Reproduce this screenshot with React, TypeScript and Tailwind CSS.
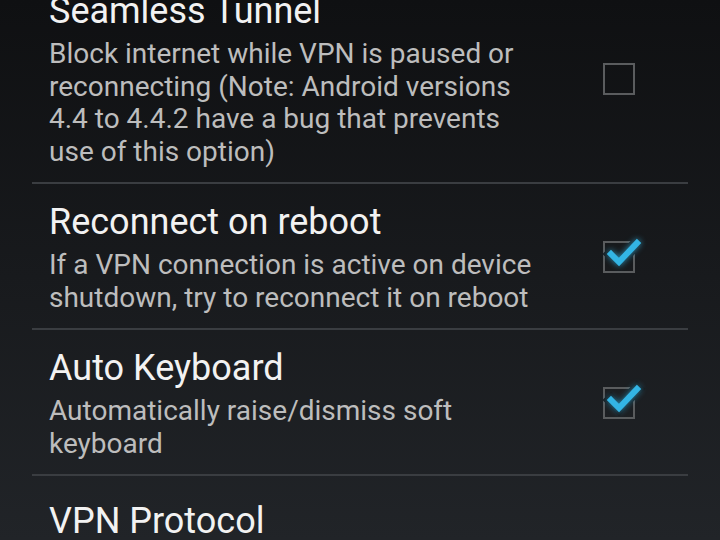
import React from "react";

type Pref = {
  title: string;
  summary?: string;
  checked?: boolean;
};

const prefs: Pref[] = [
  {
    title: "Seamless Tunnel",
    summary:
      "Block internet while VPN is paused or reconnecting (Note: Android versions 4.4 to 4.4.2 have a bug that prevents use of this option)",
    checked: false,
  },
  {
    title: "Reconnect on reboot",
    summary:
      "If a VPN connection is active on device shutdown, try to reconnect it on reboot",
    checked: true,
  },
  {
    title: "Auto Keyboard",
    summary: "Automatically raise/dismiss soft keyboard",
    checked: true,
  },
  { title: "VPN Protocol" },
];

function CheckBox({ checked }: { checked: boolean }) {
  return (
    <svg width="40" height="40" viewBox="0 0 40 40" className="block overflow-visible">
      <rect x="1" y="7" width="30" height="30" fill="none" stroke="#5a5c5e" strokeWidth="2" />
      {checked && (
        <>
          <polyline
            points="8,19 16,27 34,8"
            fill="none"
            stroke="#17191c"
            strokeWidth="12"
            strokeLinecap="square"
          />
          <polyline
            points="8,19 16,27 34,8"
            fill="none"
            stroke="#33b5e5"
            strokeWidth="6"
            strokeLinecap="square"
            style={{ filter: "drop-shadow(0 0 3px rgba(51,181,229,0.8))" }}
          />
        </>
      )}
    </svg>
  );
}

export default function App() {
  return (
    <div
      className="w-[720px] h-[540px] overflow-hidden bg-gradient-to-b from-[#0f1012] to-[#212428]"
      style={{ fontFamily: "Roboto, 'Noto Sans', sans-serif" }}
    >
      <div className="-mt-[27px] px-[32px] flex flex-col">
        {prefs.map((p) => (
          <div
            key={p.title}
            className={
              p.summary
                ? "flex items-center pl-[17px] pr-[45px] pt-[16px] pb-[14px] border-b-2 border-[#3a3d41]"
                : "flex items-center pl-[17px] pr-[45px] pt-[23px]"
            }
          >
            <div className="flex-1 min-w-0">
              <div className="text-[36px] leading-[44px] text-[#f2f2f2]">{p.title}</div>
              {p.summary && (
                <div className="mt-[5px] w-[500px] text-[28px] leading-[32.5px] text-[#bdbdbd]">
                  {p.summary}
                </div>
              )}
            </div>
            {p.summary && (
              <div className="shrink-0 -mt-[4px]">
                <CheckBox checked={!!p.checked} />
              </div>
            )}
          </div>
        ))}
      </div>
    </div>
  );
}
